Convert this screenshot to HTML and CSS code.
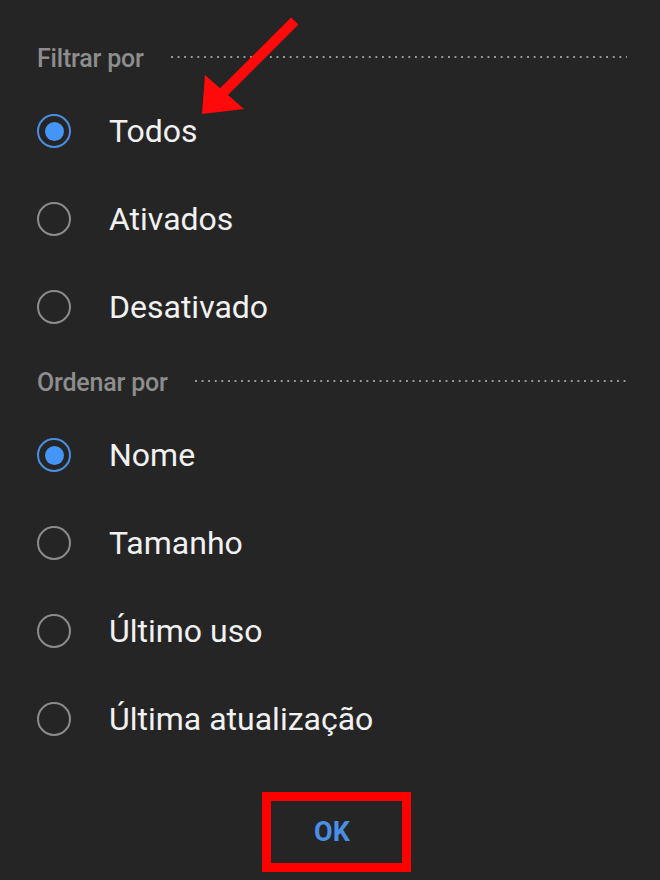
FILE: index.html
```html
<!DOCTYPE html>
<html lang="pt">
<head>
<meta charset="utf-8">
<title>Filtrar e ordenar</title>
<link rel="stylesheet" href="styles.css">
</head>
<body>
<div class="sheet">
  <div class="section-head">
    <span class="section-label">Filtrar por</span>
    <span class="dots"></span>
  </div>
  <ul class="options">
    <li class="option"><span class="radio checked"></span><span class="option-text">Todos</span></li>
    <li class="option"><span class="radio"></span><span class="option-text">Ativados</span></li>
    <li class="option"><span class="radio"></span><span class="option-text">Desativado</span></li>
  </ul>
  <div class="section-head second">
    <span class="section-label">Ordenar por</span>
    <span class="dots"></span>
  </div>
  <ul class="options">
    <li class="option"><span class="radio checked"></span><span class="option-text">Nome</span></li>
    <li class="option"><span class="radio"></span><span class="option-text">Tamanho</span></li>
    <li class="option"><span class="radio"></span><span class="option-text">Último uso</span></li>
    <li class="option"><span class="radio"></span><span class="option-text">Última atualização</span></li>
  </ul>
  <div class="footer">
    <button class="ok-btn" type="button">OK</button>
  </div>
  <svg class="arrow" width="660" height="880" viewBox="0 0 660 880" aria-hidden="true">
    <polygon fill="#ff0a0a" points="291,17.5 298.5,24.5 228,95 244,109 202,114 205,75 220,88.3"/>
  </svg>
</div>
</body>
</html>
```
FILE: styles.css
```css
* { box-sizing: border-box; }
html, body {
  margin: 0;
  padding: 0;
  background: #252525;
}
body {
  font-family: Roboto, "Noto Sans", "Liberation Sans", sans-serif;
  color: #f1f1f1;
}
.sheet {
  position: relative;
  width: 660px;
  height: 880px;
  padding-top: 35px;
  overflow: hidden;
}
.section-head {
  display: flex;
  align-items: center;
  height: 46px;
  padding-left: 37px;
  padding-right: 33px;
  margin-bottom: 6px;
}
.section-head.second {
  margin-top: 8px;
}
.section-label {
  font-size: 25px;
  font-weight: 500;
  color: #8d8d8d;
  letter-spacing: -0.2px;
}
.dots {
  flex: 1;
  height: 2px;
  margin-left: 27px;
  margin-top: -2px;
  background-image: linear-gradient(to right, #9a9a9a 2px, transparent 2px);
  background-size: 6.6px 2px;
  background-repeat: repeat-x;
}
.options {
  list-style: none;
  margin: 0;
  padding: 0;
}
.option {
  display: flex;
  align-items: center;
  height: 88px;
  padding-left: 37px;
}
.radio {
  position: relative;
  width: 34px;
  height: 34px;
  border-radius: 50%;
  border: 2.5px solid #8c8c8c;
  flex: none;
}
.radio.checked {
  border: 2.5px solid #4a8fe2;
}
.radio.checked::before {
  content: "";
  position: absolute;
  left: 50%;
  top: 50%;
  width: 19px;
  height: 19px;
  margin: -9.5px 0 0 -9.5px;
  border-radius: 50%;
  background: #4595f8;
}
.option-text {
  margin-left: 38px;
  font-size: 32px;
  font-weight: 400;
  color: #f1f1f1;
}
.footer {
  display: flex;
  justify-content: center;
  margin-top: 38px;
}
.ok-btn {
  position: relative;
  width: 131px;
  height: 62px;
  margin-left: 4px;
  border: none;
  background: transparent;
  color: #4a8fe4;
  font-family: Roboto, "Noto Sans", "Liberation Sans", sans-serif;
  font-size: 27px;
  font-weight: 700;
  padding: 0;
}
.ok-btn::after {
  content: "";
  position: absolute;
  top: -9px;
  bottom: -9px;
  left: -5px;
  right: -13px;
  border: 9px solid #ff0000;
}
.arrow {
  position: absolute;
  left: 0;
  top: 0;
  pointer-events: none;
}
```
